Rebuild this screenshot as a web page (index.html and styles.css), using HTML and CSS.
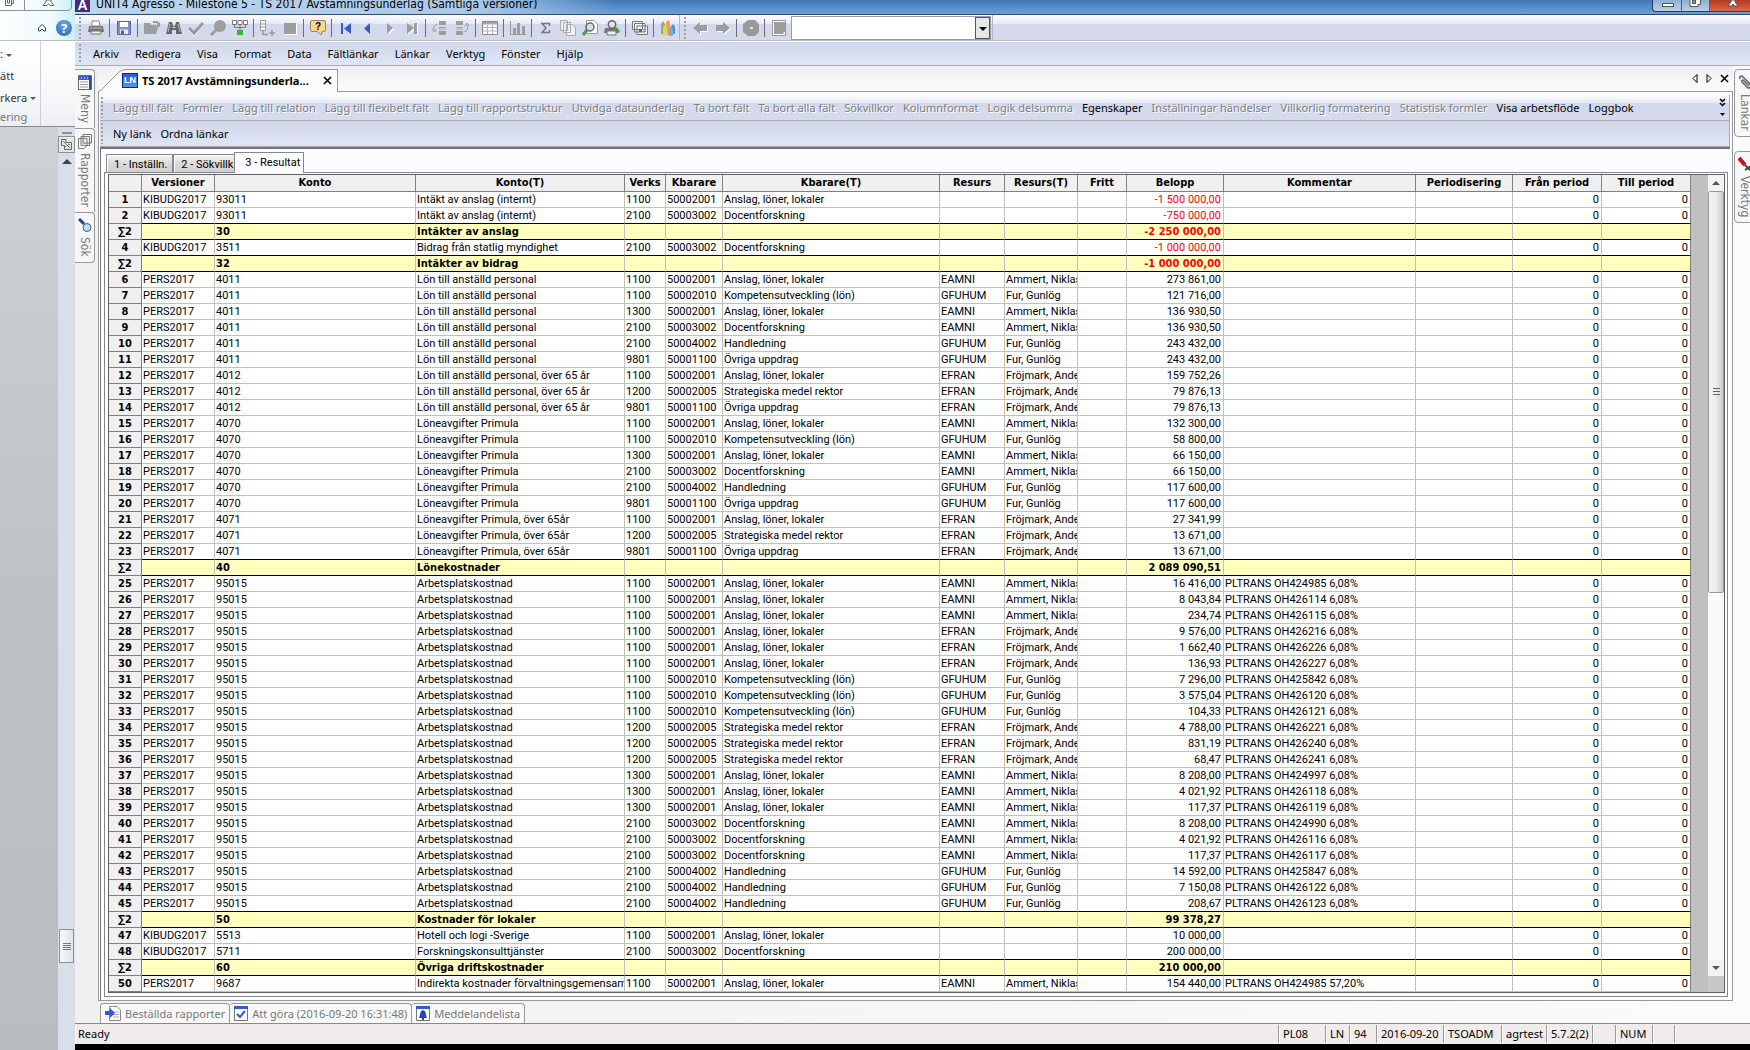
FILE: index.html
```html
<!DOCTYPE html>
<html lang="sv">
<head>
  <meta charset="UTF-8">
  <title>UNIT4 Agresso - TS 2017 Avstämningsunderlag</title>
  <link rel="stylesheet" href="styles.css">
</head>
<body>

  <!-- Fönstret som ligger bakom -->
  <aside class="word">
    <div class="word-top">
      <div class="word-controls">
        <svg width="72" height="11" viewBox="0 0 72 11"><path d="M0 10.500H67Q71.500 10.500 71.500 6V0M24.500 0V10" fill="none" stroke="#8b9399"/><path d="M5.500 0V5.500H11.500V0M7.500 0V3H9.500V0M11.500 3.500H13.500V0" fill="none" stroke="#666"/><path d="M43 5.500L46 2V0H51V2L54 5.500H50L48.500 3.500L47 5.500Z" fill="#fff" stroke="#666"/></svg>
      </div>
      <div class="word-help">
        <svg width="10" height="10" viewBox="0 0 10 10"><path d="M1.500 5L5 1.500L8.500 5V8H7L5 6L3 8H1.500Z" fill="#fff" stroke="#444"/></svg>
        <button class="help" aria-label="Hjälp">?</button>
      </div>
    </div>
    <div class="word-ribbon">
      <div class="word-group">
        <button>: <i class="caret"></i></button>
        <button>ätt</button>
        <button>rkera <i class="caret"></i></button>
        <span>ering</span>
      </div>
    </div>
    <div class="word-page">
      <div class="word-scroll">
        <i class="split"></i>
        <svg class="ruler" width="17" height="17" viewBox="0 0 17 17"><rect x=".5" y=".5" width="16" height="16" fill="#e4e8ed" stroke="#8c9196"/><path d="M3.500 3.500H8V6.500H13.500V13.500H6.500V9.500H3.500ZM5 5L12 12M8 10L6.500 11.500M10 8L12 9" fill="none" stroke="#666"/></svg>
        <i class="up"></i>
        <i class="word-thumb"></i>
      </div>
    </div>
  </aside>

  <div class="agresso">
    <header class="titlebar">
      <span class="logo">A</span>
      <span class="title">UNIT4 Agresso - Milestone 5 - TS 2017 Avstämningsunderlag (Samtliga versioner)</span>
      <div class="window-buttons">
        <button aria-label="Minimera"><svg width="28" height="12" viewBox="0 0 28 12"><rect x="9.500" y="3.500" width="11" height="3" fill="#fff" stroke="#555"/></svg></button>
        <button aria-label="Återställ"><svg width="27" height="12" viewBox="0 0 27 12"><path d="M8 0V6.500H16V4.500H18.500V0" fill="#fff" stroke="#555"/><rect x="10.500" y="0" width="3" height="3.500" fill="#79a" stroke="#555"/></svg></button>
        <button class="close" aria-label="Stäng"><svg width="40" height="12" viewBox="0 0 40 12"><path d="M18 6L21 2V0H25V2L28 6H24.500L23 4L21.500 6Z" fill="#fff" stroke="#555"/></svg></button>
      </div>
    </header>

    <div class="toolbar">
      <i class="grip"></i>
      <button aria-label="Skriv ut"><svg viewBox="0 0 16 16"><path d="M4 1H11L12 6H4Z" fill="#fff" stroke="#888"/><path d="M1 6H15L16 12H0Z" fill="#777"/><path d="M2 8H14" stroke="#bbb"/><path d="M3 11H13V14H3Z" fill="#eee" stroke="#777"/><path d="M12 12H14V14H12Z" fill="#7c6"/></svg></button>
      <i class="sep"></i>
      <button aria-label="Spara"><svg viewBox="0 0 16 16"><path d="M1.500 1.500H14.500V14.500H1.500Z" fill="#8292c4" stroke="#5a6797"/><path d="M4 2H12V7H4Z" fill="#fff"/><path d="M4 9.500H12V14H4Z" fill="#e8eaf2"/><path d="M5 10.500H8V14H5Z" fill="#55618c"/></svg></button>
      <i class="sep"></i>
      <button aria-label="Öppna"><svg viewBox="0 0 16 16"><path d="M0 3H6L7 5H12V7H14L12 14H0ZM9 1H14V3L16 2V7H12L13 5V3H9Z" fill="#9d9d9d"/></svg></button>
      <button aria-label="Sök"><svg viewBox="0 0 16 16"><path d="M3 2H6L7 6H9L10 2H13L16 14H10V10H6V14H0Z" fill="#666"/><path d="M4 4L2 12M12 4L14 12" stroke="#bbb"/><path d="M6.500 7.500H9.500" stroke="#ddd"/></svg></button>
      <button aria-label="Bekräfta"><svg viewBox="0 0 16 16"><path d="M1 9L6 14L15 4" fill="none" stroke="#fff" stroke-width="3"/><path d="M1 8L6 13L15 3" fill="none" stroke="#999" stroke-width="3"/></svg></button>
      <button aria-label="Zooma"><svg viewBox="0 0 16 16"><circle cx="10" cy="6" r="6" fill="#9d9d9d"/><path d="M7 9L1 15" stroke="#9d9d9d" stroke-width="3"/></svg></button>
      <button aria-label="Struktur"><svg viewBox="0 0 16 16"><path d="M.5.5H4.500V4.500H.5ZM6 .5H10V4.500H6ZM11.500.5H15.500V4.500H11.500Z" fill="#fff" stroke="#777"/><path d="M2.500 5V7.500H13.500V5M8 5V11" fill="none" stroke="#777"/><path d="M5 10H11V15H5Z" fill="#3fae3f"/></svg></button>
      <i class="sep"></i>
      <button aria-label="Lägg till rad"><svg viewBox="0 0 16 16"><path d="M.5.500H5.500V10.500H.5ZM1 4H5M1 7H5" fill="#fff" stroke="#999"/><path d="M3 11V14.500H8M12 10V16M9 13H15" fill="none" stroke="#999" stroke-width="1.500"/></svg></button>
      <button aria-label="Stopp"><svg viewBox="0 0 16 16"><path d="M3 4H15V15H3Z" fill="#fff"/><path d="M2 3H14V14H2Z" fill="#9d9d9d"/></svg></button>
      <i class="sep"></i>
      <button aria-label="Hjälp"><svg viewBox="0 0 16 16"><path d="M2 .5H14Q15.500.5 15.500 2V10Q15.500 11.500 14 11.500H12L11 15L7 11.500H2Q.5 11.500.5 10V2Q.5.500 2 .5Z" fill="#ffd685" stroke="#9a8566"/><text x="5" y="10" class="balloon-mark">?</text></svg></button>
      <i class="sep"></i>
      <button aria-label="Första"><svg viewBox="0 0 16 16"><path d="M3 3H5V14H3ZM13 3V14L6 8.500Z" fill="#3b56c8"/></svg></button>
      <button aria-label="Föregående"><svg viewBox="0 0 16 16"><path d="M10 3V14L4 8.500Z" fill="#3b56c8"/></svg></button>
      <button aria-label="Nästa"><svg viewBox="0 0 16 16"><path d="M6 4V15L12 9Z" fill="#fff"/><path d="M5 3V14L11 8Z" fill="#9d9d9d"/></svg></button>
      <button aria-label="Sista"><svg viewBox="0 0 16 16"><path d="M4 4V15L11 9ZM12 4H14V15H12Z" fill="#fff"/><path d="M3 3V14L10 8ZM10 3H13V14H10Z" fill="#9d9d9d"/></svg></button>
      <i class="sep"></i>
      <button aria-label="Infoga före"><svg viewBox="0 0 16 16"><path d="M7 1H14V5H7ZM7 11H14V15H7Z" fill="#9d9d9d"/><path d="M7.500 7.500H13V9H7.500Z" fill="#fff" stroke="#9d9d9d"/><path d="M5 4Q1 5 2 10M0 9L2.500 12L4 9" fill="none" stroke="#9d9d9d"/></svg></button>
      <button aria-label="Infoga efter"><svg viewBox="0 0 16 16"><path d="M2 1H9V5H2ZM2 11H9V15H2Z" fill="#9d9d9d"/><path d="M3 7.500H8V9H3Z" fill="#fff" stroke="#9d9d9d"/><path d="M10 12Q15 11 13 5M11 6L13 3L15 6" fill="none" stroke="#9d9d9d"/></svg></button>
      <i class="sep"></i>
      <button aria-label="Tabell"><svg viewBox="0 0 16 16"><path d="M.5 1.500H15.500V14.500H.5Z" fill="#fff" stroke="#888"/><path d="M1 2H15V4.500H1Z" fill="#a5a9a9"/><path d="M1 7.500H15M1 11H15M5.500 5V14M10.500 5V14" stroke="#b5b5b5"/></svg></button>
      <i class="sep"></i>
      <button aria-label="Diagram"><svg viewBox="0 0 16 16"><path d="M.5 1V14.500H16" fill="none" stroke="#999"/><path d="M3 8H6V14H3ZM7 3H10V14H7ZM12 6H15V14H12Z" fill="#9d9d9d"/></svg></button>
      <i class="sep"></i>
      <button aria-label="Summa"><svg viewBox="0 0 16 16"><path d="M11.500 6V3.500H4L8 8L4 12.500H11.500V10" fill="none" stroke="#777" stroke-width="1.500"/></svg></button>
      <button aria-label="Kopiera"><svg viewBox="0 0 16 16"><path d="M.5.500H7.500V10.500H.5ZM3.500 2.500H10.500V12.500H3.500ZM6.500 4.500H12L15.500 8V15.500H6.500Z" fill="#f2f2f2" stroke="#aaa"/></svg></button>
      <button aria-label="Förhandsgranska"><svg viewBox="0 0 16 16"><path d="M4.500.5H12L15.500 4V13.500H4.500Z" fill="#fff" stroke="#999"/><circle cx="8" cy="7" r="4" fill="#cfe0e6" stroke="#666" stroke-width="1.500"/><path d="M5 10L1 15" stroke="#4a9c3c" stroke-width="3"/></svg></button>
      <button aria-label="Granska utskrift"><svg viewBox="0 0 16 16"><path d="M1 8H14L15 13H0Z" fill="#777"/><path d="M3 11H12V15H3Z" fill="#eee" stroke="#777"/><circle cx="8" cy="4.500" r="3.700" fill="#dde6e6" stroke="#666" stroke-width="1.500"/><path d="M11 8L15 12" stroke="#4a9c3c" stroke-width="2.500"/></svg></button>
      <i class="sep"></i>
      <button aria-label="Fönster"><svg viewBox="0 0 16 16"><path d="M.5 1.500H10.500V9.500H.5ZM2.500 3.500H13V12H2.500ZM5 6H15.500V14.500H5Z" fill="#f4f4f4" stroke="#777"/><path d="M7 9H10V12H7Z" fill="#3f5fb8"/><path d="M11 9.500H14M11 11.500H14" stroke="#888"/></svg></button>
      <i class="sep"></i>
      <button aria-label="Färger"><svg viewBox="0 0 16 16"><path d="M1 4L3 1L5 4V14H1Z" fill="#8fb070"/><path d="M6 2L8 0L10 2V15H6Z" fill="#f0a050"/><path d="M3 8L5 5L7 8V16H3Z" fill="#e8d070"/><path d="M11 7L13 4L15 7V14H11Z" fill="#4a90bc"/><path d="M9 9L11 6L13 9V16H9Z" fill="#76b0d0"/></svg></button>
      <i class="bar-end"></i>
      <i class="grip"></i>
      <button aria-label="Bakåt"><svg viewBox="0 0 16 16"><path d="M1 9L8 3V6H15V12H8V15Z" fill="#fff"/><path d="M0 8L7 2V5H14V11H7V14Z" fill="#9d9d9d"/></svg></button>
      <button aria-label="Framåt"><svg viewBox="0 0 16 16"><path d="M16 9L9 3V6H2V12H9V15Z" fill="#fff"/><path d="M15 8L8 2V5H1V11H8V14Z" fill="#9d9d9d"/></svg></button>
      <i class="sep"></i>
      <button aria-label="Stoppa"><svg viewBox="0 0 16 16"><path d="M5 0H12L16 4V12L12 16H5L0 12V4Z" fill="#999"/><path d="M7 7H10V9H7Z" fill="#e4e4ea"/></svg></button>
      <i class="sep"></i>
      <button aria-label="Sida"><svg viewBox="0 0 16 16"><path d="M1.500.5H14.500V15.500H1.500Z" fill="#fff" stroke="#999"/><path d="M3 2H14V12H13L12 14H3Z" fill="#9d9d9d"/></svg></button>
      <div class="combo">
        <select aria-label="Adress"><option></option></select>
        <i class="combo-arrow"></i>
      </div>
      <i class="bar-end"></i>
    </div>

    <nav class="menu">
      <i class="grip"></i>
      <button>Arkiv</button>
      <button>Redigera</button>
      <button>Visa</button>
      <button>Format</button>
      <button>Data</button>
      <button>Fältlänkar</button>
      <button>Länkar</button>
      <button>Verktyg</button>
      <button>Fönster</button>
      <button>Hjälp</button>
    </nav>

    <div class="workspace">
      <div class="side side-left">
        <button><svg width="14" height="15" viewBox="0 0 14 15"><path d="M.5.5H13.500V14.500H.5Z" fill="#fff" stroke="#667"/><path d="M1 1H11V5H1Z" fill="#3b5fd0"/><path d="M12 1V14" stroke="#2b45a0" stroke-width="2"/><path d="M2 7H10M2 9.500H10M2 12H10" stroke="#999"/><path d="M3 3H4M6 3H7M9 3H10" stroke="#fff"/></svg>Meny</button>
        <button><svg width="14" height="15" viewBox="0 0 14 15"><path d="M5 .5H13.500V9H5ZM3 2.500H11.500V11.500H3ZM.5 4.500H9V11.500L6 14.500H.5Z" fill="#f4f4f4" stroke="#777"/><path d="M3 7H7M3 9H7M3 11H6" stroke="#aaa"/></svg>Rapporter</button>
        <button><svg width="14" height="15" viewBox="0 0 14 15"><path d="M1 1L6 6" stroke="#1f3f8f" stroke-width="3"/><circle cx="9" cy="9.500" r="4" fill="#b4e2ee" stroke="#557"/></svg>Sök</button>
      </div>

      <main class="document">
        <div class="doc-tabs">
          <svg class="slope" width="28" height="23" viewBox="0 0 28 23"><path d="M0 23Q4 22 7 17L20 4Q23 .5 28 .5V23Z" fill="#fcfcfc"/><path d="M0 22.500Q4 22 7 17L20 4Q23 .5 28 .5" fill="none" stroke="#999"/></svg>
          <div class="doc-tab">
            <span class="ln">LN</span>
            <b>TS 2017 Avstämningsunderla...</b>
            <button aria-label="Stäng flik"><svg width="9" height="9" viewBox="0 0 9 9"><path d="M1 1L8 8M8 1L1 8" stroke="#000" stroke-width="1.600"/></svg></button>
          </div>
          <div class="doc-nav">
            <button aria-label="Föregående flik"><svg width="6" height="9" viewBox="0 0 6 9"><path d="M5 .5V8.500L1 4.500Z" fill="#fff" stroke="#000"/></svg></button>
            <button aria-label="Nästa flik"><svg width="6" height="9" viewBox="0 0 6 9"><path d="M1 .5V8.500L5 4.500Z" fill="#fff" stroke="#000"/></svg></button>
            <button aria-label="Stäng"><svg width="9" height="9" viewBox="0 0 9 9"><path d="M1 1L8 8M8 1L1 8" stroke="#000" stroke-width="1.600"/></svg></button>
          </div>
        </div>

        <div class="frame">
          <div class="linkbar">
            <i class="grip"></i>
            <button disabled>Lägg till fält</button>
            <button disabled>Formler</button>
            <button disabled>Lägg till relation</button>
            <button disabled>Lägg till flexibelt fält</button>
            <button disabled>Lägg till rapportstruktur</button>
            <button disabled>Utvidga dataunderlag</button>
            <button disabled>Ta bort fält</button>
            <button disabled>Ta bort alla fält</button>
            <button disabled>Sökvillkor</button>
            <button disabled>Kolumnformat</button>
            <button disabled>Logik delsumma</button>
            <button>Egenskaper</button>
            <button disabled>Inställningar händelser</button>
            <button disabled>Villkorlig formatering</button>
            <button disabled>Statistisk formler</button>
            <button>Visa arbetsflöde</button>
            <button>Loggbok</button>
            <button class="more" aria-label="Fler knappar"><svg width="7" height="19" viewBox="0 0 7 19"><path d="M1 1L3.500 3.500L6 1M1 5L3.500 7.500L6 5" fill="none" stroke="#000" stroke-width="1.500"/><path d="M1 15H6L3.500 18Z"/></svg></button>
          </div>
          <div class="linkbar second">
            <i class="grip"></i>
            <button>Ny länk</button>
            <button>Ordna länkar</button>
          </div>

          <div class="panel">
            <div class="tabs">
              <button>1 - Inställn.</button>
              <button>2 - Sökvillk</button>
              <button class="active">3 - Resultat</button>
            </div>
            <div class="page">
              <div class="grid">
                <table>
                  <colgroup>
                    <col class="c-nr"><col class="c-ver"><col class="c-konto"><col class="c-kontot">
                    <col class="c-verks"><col class="c-kb"><col class="c-kbt"><col class="c-res">
                    <col class="c-rest"><col class="c-fritt"><col class="c-belopp"><col class="c-komm">
                    <col class="c-per"><col class="c-fran"><col class="c-till">
                  </colgroup>
                  <thead>
                    <tr>
                      <th></th><th>Versioner</th><th>Konto</th><th>Konto(T)</th><th>Verks</th>
                      <th>Kbarare</th><th>Kbarare(T)</th><th>Resurs</th><th>Resurs(T)</th><th>Fritt</th>
                      <th>Belopp</th><th>Kommentar</th><th>Periodisering</th><th>Från period</th><th>Till period</th>
                    </tr>
                  </thead>
                  <tbody id="rows"></tbody>
                </table>
                <div class="filler"></div>
                <div class="scrollbar">
                  <i class="arrow-up"></i>
                  <div class="track"><i class="thumb"></i></div>
                  <i class="arrow-down"></i>
                  <i class="corner"></i>
                </div>
              </div>
            </div>
          </div>
        </div>

        <div class="bottom-tabs">
          <button><svg width="16" height="15" viewBox="0 0 16 15"><path d="M4.500.5H12L15.500 4V14.500H4.500Z" fill="#fff" stroke="#888"/><path d="M8 6H14M8 8.500H14M8 11H14" stroke="#aaa"/><path d="M0 5H5V2L10 7L5 12V9H0Z" fill="#3558d4"/></svg>Beställda rapporter</button>
          <button><svg width="14" height="15" viewBox="0 0 14 15"><path d="M.5.5H13.500V14.500H.5Z" fill="#fff" stroke="#777"/><path d="M0 0H14V3H0Z" fill="#3558d4"/><path d="M3 8L6 11L11 5" fill="none" stroke="#3558d4" stroke-width="2"/></svg>Att göra (2016-09-20 16:31:48)</button>
          <button><svg width="14" height="15" viewBox="0 0 14 15"><path d="M.5.5H13.500V14.500H.5Z" fill="#fff" stroke="#777"/><path d="M0 0H14V3H0Z" fill="#3558d4"/><path d="M7 4Q10 5 10 9L11 12H3L4 9Q4 5 7 4Z" fill="#2444b8"/><path d="M6 12H8V14H6Z" fill="#2444b8"/></svg>Meddelandelista</button>
        </div>
      </main>

      <div class="side side-right">
        <button><svg width="14" height="15" viewBox="0 0 14 15"><path d="M2 4Q1 1 4 1L13 10Q13 13 10 13L4 7Q3 5 5 5L11 11" fill="none" stroke="#666" stroke-width="1.600"/></svg>Länkar</button>
        <button><svg width="14" height="15" viewBox="0 0 14 15"><path d="M1 1L7 8" stroke="#c81414" stroke-width="4"/><path d="M7 8L12 13M7 13L13 9" stroke="#444" stroke-width="2"/></svg>Verktyg</button>
      </div>
    </div>

    <footer class="statusbar">
      <span class="ready">Ready</span>
      <span class="s-client">PL08</span>
      <span class="s-ln">LN</span>
      <span class="s-no">94</span>
      <span class="s-date">2016-09-20</span>
      <span class="s-user">TSOADM</span>
      <span class="s-db">agrtest</span>
      <span class="s-ver">5.7.2(2)</span>
      <span class="s-e1"></span>
      <span class="s-num">NUM</span>
      <span class="s-e2"></span>
      <span class="s-e3"></span>
    </footer>
  </div>

  <script src="script.js"></script>
</body>
</html>
```
FILE: styles.css
```css
* {
  box-sizing: border-box;
}

body {
  margin: 0;
  min-height: 100vh;
  display: flex;
  overflow: hidden;
  background: #000;
  color: #000;
  font-family: "Noto Sans", "Open Sans", sans-serif;
  font-size: 11px;
}

button {
  margin: 0;
  padding: 0;
  border: 0;
  background: none;
  color: inherit;
  font: inherit;
  white-space: nowrap;
}

svg {
  display: block;
  flex: none;
}

/* Bakgrundsfönster */
.word {
  width: 75px;
  flex: none;
  display: flex;
  flex-direction: column;
  background: #c4c7cb;
}

.word-top {
  height: 41px;
  background: linear-gradient(90deg, #fdfefe, #eefafc 70%, #c8f0f6);
  border-bottom: 1px solid #b9bfc4;
}

.word-controls {
  height: 20px;
}

.word-help {
  display: flex;
  align-items: center;
  justify-content: flex-end;
  gap: 9px;
  padding-right: 3px;
}

.help {
  width: 16px;
  height: 16px;
  border-radius: 50%;
  background: radial-gradient(circle at 50% 30%, #6ea6e6, #2a62b4);
  color: #fff;
  font-size: 13px;
  font-weight: bold;
  line-height: 16px;
}

.word-ribbon {
  height: 86px;
  background: linear-gradient(#fff, #f6f7f9 70%, #eceef1);
  border-bottom: 1px solid #868a8f;
}

.word-group {
  width: 41px;
  height: 85px;
  padding-top: 2px;
  border-right: 1px solid #ccd0d5;
  display: flex;
  flex-direction: column;
  align-items: flex-start;
  color: #333;
}

.word-group button {
  height: 22px;
}

.word-group span {
  height: 18px;
  line-height: 18px;
  color: #777;
}

.caret {
  display: inline-block;
  vertical-align: middle;
  border: 3px solid transparent;
  border-top-color: #555;
  border-bottom: 0;
}

.word-page {
  flex: 1;
  display: flex;
  justify-content: flex-end;
  background: linear-gradient(#ced1d6, #bec1c6 50%, #b9bcc1);
}

.word-scroll {
  width: 17px;
  display: flex;
  flex-direction: column;
  align-items: center;
  background: #d9dfe8;
}

.split {
  width: 10px;
  height: 2px;
  margin: 5px 0 2px;
  background: #8c9196;
}

.up {
  margin-top: 6px;
  border: 5px solid transparent;
  border-bottom-color: #444;
  border-top: 0;
}

.word-thumb {
  width: 15px;
  height: 34px;
  margin: auto 0 88px;
  border: 1px solid #8a9097;
  background:
    repeating-linear-gradient(#777 0 1px, transparent 1px 2px) center / 8px 7px no-repeat,
    linear-gradient(90deg, #f6f8fa, #dfe4ea);
}

/* Huvudfönster */
.agresso {
  flex: 1;
  min-width: 0;
  display: flex;
  flex-direction: column;
  background: #f0f0f0;
  border-bottom: 7px solid #000;
}

.titlebar {
  height: 15px;
  display: flex;
  align-items: flex-start;
  overflow: hidden;
  background: linear-gradient(90deg, #bcd6ee, #a9c9e8 400px, rgba(169, 201, 232, 0) 540px), linear-gradient(#3f78b4, #6ba0da);
  border-bottom: 1px solid #33486a;
}

.logo {
  width: 15px;
  height: 12px;
  background: #4a2a7c;
  color: #fff;
  font: bold 14px/10px "Liberation Sans", sans-serif;
  text-align: center;
}

.title {
  flex: 1;
  padding-left: 6px;
  font: 12px/9px "DejaVu Sans Condensed", sans-serif;
  white-space: nowrap;
}

.window-buttons {
  height: 12px;
  display: flex;
  border: 1px solid #2c3e55;
  border-width: 0 0 1px 1px;
  border-radius: 0 0 0 4px;
  background: linear-gradient(#8fb0d2, #b9d0e6);
}

.window-buttons button + button {
  border-left: 1px solid #4a6584;
}

.window-buttons .close {
  background: linear-gradient(#b03a22, #dc6a4c);
}

.toolbar {
  height: 27px;
  display: flex;
  align-items: center;
  padding-left: 4px;
  background: linear-gradient(#fdfdff, #e4e9f5 9px, #d3d9ec 9px, #d5dbed);
  border-bottom: 1px solid #fff;
  box-shadow: inset 0 -1px #b8bbc4;
}

.toolbar button {
  width: 22px;
  padding: 0 3px;
}

.toolbar svg {
  width: 16px;
  height: 16px;
}

.balloon-mark {
  font: bold 10px "Liberation Sans", sans-serif;
}

.grip {
  width: 6px;
  align-self: stretch;
  flex: none;
  margin: 2px 0;
  background: linear-gradient(#9a9eaa 2px, transparent 2px) 0 0 / 2px 4px repeat-y;
}

.sep {
  width: 1px;
  height: 18px;
  margin: 0 3px 0 2px;
  flex: none;
  background: #6c6f78;
}

.bar-end {
  width: 1px;
  margin-right: 4px;
  align-self: stretch;
  flex: none;
  background: #b4b7c0;
}

.combo {
  position: relative;
  width: 200px;
  height: 24px;
  margin: 0 1px;
}

.combo select {
  width: 100%;
  height: 100%;
  appearance: none;
  background: #fff;
  border: 1px solid #9a9da6;
  border-radius: 0;
}

.combo-arrow {
  position: absolute;
  top: 1px;
  right: 1px;
  width: 15px;
  height: 22px;
  border: 1px solid #555;
  background: #e6e6e6;
  pointer-events: none;
}

.combo-arrow::after {
  content: "";
  position: absolute;
  top: 9px;
  left: 3px;
  border: 4px solid transparent;
  border-top-color: #000;
  border-bottom: 0;
}

.menu {
  height: 24px;
  display: flex;
  align-items: center;
  padding-left: 4px;
  background: linear-gradient(#d2d8ec, #dfe5f4);
  border-bottom: 1px solid #adadad;
}

.menu button {
  padding: 0 8px;
}

.workspace {
  flex: 1;
  display: flex;
  background: linear-gradient(90deg, #f0f0f0, #fbfbfb);
  border-bottom: 1px solid #888;
}

/* Lodräta flikar */
.side {
  display: flex;
  flex-direction: column;
  flex: none;
  overflow: hidden;
  padding-top: 3px;
}

.side-left {
  width: 23px;
  align-items: flex-start;
  background: #f0f0f0;
}

.side-right {
  width: 17px;
  padding-left: 1px;
  gap: 14px;
  background: #fbfbfb;
}

.side button {
  display: flex;
  align-items: center;
  gap: 4px;
  padding: 5px 2px;
  writing-mode: vertical-rl;
  border: 1px solid #999;
  color: #777;
  font: 12px/14px "DejaVu Sans Condensed", sans-serif;
  background: #f7f7f7;
}

.side-left button {
  width: 20px;
  border-width: 1px 1px 0 0;
  border-radius: 0 4px 0 0;
}

.side-left button:last-child {
  border-bottom-width: 1px;
  border-bottom-right-radius: 4px;
}

.side-right button {
  width: 22px;
  border-radius: 4px 0 0 4px;
}

/* Dokument */
.document {
  flex: 1;
  min-width: 0;
  display: flex;
  flex-direction: column;
}

.doc-tabs {
  height: 26px;
  display: flex;
  align-items: flex-end;
  border-bottom: 1px solid #999;
  background: linear-gradient(#efefef, #fcfcfc);
}

.slope {
  margin-bottom: -1px;
}

.doc-tab {
  height: 23px;
  margin-bottom: -1px;
  padding: 0 5px 1px 0;
  display: flex;
  align-items: center;
  gap: 4px;
  border-top: 1px solid #999;
  border-right: 1px solid #999;
  background: #fcfcfc;
}

.doc-tab b {
  margin-right: 10px;
}

.ln {
  width: 16px;
  height: 15px;
  margin-left: -4px;
  border: 1px solid #0a2a9a;
  background: linear-gradient(#2a55d8, #4f96f4);
  color: #fff;
  font: bold 9px/13px "Liberation Sans", sans-serif;
  text-align: center;
}

.doc-nav {
  flex: 1;
  display: flex;
  justify-content: flex-end;
  align-items: center;
  align-self: center;
  gap: 8px;
  padding-right: 4px;
}

.frame {
  flex: 1;
  display: flex;
  flex-direction: column;
  padding: 3px 2px 0 1px;
  border: 1px solid #999;
  border-top: 0;
  background: #fcfcff;
}

.linkbar {
  height: 26px;
  display: flex;
  align-items: center;
  gap: 1px;
  padding-left: 1px;
  background: linear-gradient(#fdfdff, #e4e9f5 8px, #d3d9ec 8px, #d5dbed);
  border-bottom: 1px solid #aaa;
  border-right: 1px solid #aaa;
}

.linkbar button {
  padding: 0 4px;
}

.linkbar .grip + button {
  margin-left: 1px;
}

.linkbar button:disabled {
  color: #7d7d7d;
  text-shadow: 1px 1px #fff;
}

.linkbar .more {
  margin-left: auto;
  padding: 0 3px;
}

.linkbar.second {
  background: linear-gradient(#d2d8ec, #dfe5f4);
}

.panel {
  flex: 1;
  display: flex;
  flex-direction: column;
  padding: 4px 2px 3px 3px;
  border-top: 2px solid #74767a;
  border-left: 1px solid #74767a;
  background: #fcfcff;
}

.tabs {
  height: 19px;
  display: flex;
  align-items: flex-end;
  padding-left: 2px;
  font-family: Roboto, sans-serif;
}

.tabs button {
  height: 18px;
  padding: 2px 5px 0 7px;
  border: 1px solid #85878c;
  border-bottom: 0;
  background: linear-gradient(#f4f4f4, #dadada 50%, #d0d0d0);
  box-shadow: inset 1px 1px #fff;
}

.tabs button + button {
  padding-right: 2px;
}

.tabs button + .active {
  height: 21px;
  margin: 0 0 -1px -2px;
  padding: 0 3px 2px 10px;
  background: #fcfcff;
  position: relative;
}

.page {
  flex: 1;
  display: flex;
  padding: 1px 2px 3px 3px;
  border: 1px solid #85878c;
}

.grid {
  flex: 1;
  min-width: 0;
  display: flex;
  border: 1px solid #606060;
  background: #c0c0c0;
}

table {
  width: 1582px;
  flex: none;
  table-layout: fixed;
  border-collapse: separate;
  border-spacing: 0;
  font-family: Roboto, sans-serif;
  align-self: flex-start;
}

.c-nr { width: 33px; }
.c-ver { width: 73px; }
.c-konto { width: 201px; }
.c-kontot { width: 209px; }
.c-verks { width: 41px; }
.c-kb { width: 57px; }
.c-kbt { width: 217px; }
.c-res { width: 65px; }
.c-rest { width: 73px; }
.c-fritt { width: 49px; }
.c-belopp { width: 97px; }
.c-komm { width: 192px; }
.c-per { width: 97px; }
.c-fran { width: 89px; }
.c-till { width: 89px; }

th,
.sum td {
  font: bold 11px/15px "DejaVu Sans Condensed", sans-serif;
}

th {
  height: 16px;
  padding: 0;
  background: #f0f0f0;
  border-right: 1px solid #808080;
  border-bottom: 1px solid #808080;
  white-space: nowrap;
}

thead th {
  height: 17px;
  line-height: 16px;
}

td {
  height: 16px;
  padding: 0 2px 0 1px;
  background: #fff;
  border-right: 1px solid #c0c0c0;
  border-bottom: 1px solid #c0c0c0;
  line-height: 15px;
  white-space: nowrap;
  overflow: hidden;
}

td:nth-child(9) {
  padding-right: 0;
}

td:last-child {
  border-right-color: #808080;
}

.num {
  text-align: right;
}

.neg {
  color: #f00;
}

.sum td {
  background: #ffffc0;
}

.sum td,
.before-sum td {
  border-bottom-color: #000;
}

.filler {
  flex: 1;
}

.scrollbar {
  width: 16px;
  display: flex;
  flex-direction: column;
  background: #fafafa;
}

.arrow-up,
.arrow-down {
  height: 16px;
  display: flex;
  align-items: center;
  justify-content: center;
  background: #f3f3f3;
}

.arrow-up::after,
.arrow-down::after {
  content: "";
  border: 4px solid transparent;
}

.arrow-up::after {
  border-bottom-color: #555;
  border-top: 0;
}

.arrow-down::after {
  border-top-color: #555;
  border-bottom: 0;
}

.track {
  flex: 1;
}

.thumb {
  display: block;
  height: 402px;
  border: 1px solid #999;
  border-radius: 2px;
  background:
    repeating-linear-gradient(#666 0 1px, transparent 1px 3px) center / 7px 9px no-repeat,
    linear-gradient(90deg, #f5f5f5, #ececee 50%, #c8c9cc);
}

.corner {
  height: 16px;
  background: #c8c8c8;
}

.bottom-tabs {
  height: 22px;
  display: flex;
  align-items: flex-end;
  padding-left: 2px;
}

.bottom-tabs button {
  height: 20px;
  display: flex;
  align-items: center;
  gap: 4px;
  padding: 0 4px;
  border: 1px solid #999;
  border-bottom: 0;
  border-radius: 3px 4px 0 0;
  background: #f8f8f8;
  color: #777;
}

.bottom-tabs button + button {
  border-left: 0;
}

.statusbar {
  height: 20px;
  display: flex;
  padding: 1px 0;
  background: #f0eceb;
  line-height: 17px;
}

.statusbar span {
  flex: none;
  padding-left: 4px;
  border-left: 1px solid #999;
  box-shadow: inset 1px 0 #fff;
}

.statusbar .ready {
  flex: 1;
  padding-left: 3px;
  border-left: 0;
}

.s-client { width: 47px; }
.s-ln { width: 24px; }
.s-no { width: 27px; }
.s-date { width: 67px; }
.s-user { width: 58px; }
.s-db { width: 45px; }
.s-ver { width: 46px; }
.s-e1 { width: 23px; }
.s-num { width: 37px; }
.s-e2 { width: 22px; }
.s-e3 { width: 76px; }
```
FILE: script.js
```js
const kontoText = {
  93011: 'Intäkt av anslag (internt)',
  3511: 'Bidrag från statlig myndighet',
  4011: 'Lön till anställd personal',
  4012: 'Lön till anställd personal, över 65 år',
  4070: 'Löneavgifter Primula',
  4071: 'Löneavgifter Primula, över 65år',
  95015: 'Arbetsplatskostnad',
  5513: 'Hotell och logi -Sverige',
  5711: 'Forskningskonsulttjänster',
  9687: 'Indirekta kostnader förvaltningsgemensam'
};

const kbarareText = {
  50002001: 'Anslag, löner, lokaler',
  50002005: 'Strategiska medel rektor',
  50002010: 'Kompetensutveckling (lön)',
  50003002: 'Docentforskning',
  50004002: 'Handledning',
  50001100: 'Övriga uppdrag'
};

const resursText = {
  EAMNI: 'Ammert, Niklas',
  GFUHUM: 'Fur, Gunlög',
  EFRAN: 'Fröjmark, Ande'
};

// version|konto|verks|kbarare|resurs|belopp|kommentar, summarader: S|konto|text|belopp
const data = `
KIBUDG2017|93011|1100|50002001||-1 500 000,00|
KIBUDG2017|93011|2100|50003002||-750 000,00|
S|30|Intäkter av anslag|-2 250 000,00
KIBUDG2017|3511|2100|50003002||-1 000 000,00|
S|32|Intäkter av bidrag|-1 000 000,00
PERS2017|4011|1100|50002001|EAMNI|273 861,00|
PERS2017|4011|1100|50002010|GFUHUM|121 716,00|
PERS2017|4011|1300|50002001|EAMNI|136 930,50|
PERS2017|4011|2100|50003002|EAMNI|136 930,50|
PERS2017|4011|2100|50004002|GFUHUM|243 432,00|
PERS2017|4011|9801|50001100|GFUHUM|243 432,00|
PERS2017|4012|1100|50002001|EFRAN|159 752,26|
PERS2017|4012|1200|50002005|EFRAN|79 876,13|
PERS2017|4012|9801|50001100|EFRAN|79 876,13|
PERS2017|4070|1100|50002001|EAMNI|132 300,00|
PERS2017|4070|1100|50002010|GFUHUM|58 800,00|
PERS2017|4070|1300|50002001|EAMNI|66 150,00|
PERS2017|4070|2100|50003002|EAMNI|66 150,00|
PERS2017|4070|2100|50004002|GFUHUM|117 600,00|
PERS2017|4070|9801|50001100|GFUHUM|117 600,00|
PERS2017|4071|1100|50002001|EFRAN|27 341,99|
PERS2017|4071|1200|50002005|EFRAN|13 671,00|
PERS2017|4071|9801|50001100|EFRAN|13 671,00|
S|40|Lönekostnader|2 089 090,51
PERS2017|95015|1100|50002001|EAMNI|16 416,00|PLTRANS OH424985 6,08%
PERS2017|95015|1100|50002001|EAMNI|8 043,84|PLTRANS OH426114 6,08%
PERS2017|95015|1100|50002001|EAMNI|234,74|PLTRANS OH426115 6,08%
PERS2017|95015|1100|50002001|EFRAN|9 576,00|PLTRANS OH426216 6,08%
PERS2017|95015|1100|50002001|EFRAN|1 662,40|PLTRANS OH426226 6,08%
PERS2017|95015|1100|50002001|EFRAN|136,93|PLTRANS OH426227 6,08%
PERS2017|95015|1100|50002010|GFUHUM|7 296,00|PLTRANS OH425842 6,08%
PERS2017|95015|1100|50002010|GFUHUM|3 575,04|PLTRANS OH426120 6,08%
PERS2017|95015|1100|50002010|GFUHUM|104,33|PLTRANS OH426121 6,08%
PERS2017|95015|1200|50002005|EFRAN|4 788,00|PLTRANS OH426221 6,08%
PERS2017|95015|1200|50002005|EFRAN|831,19|PLTRANS OH426240 6,08%
PERS2017|95015|1200|50002005|EFRAN|68,47|PLTRANS OH426241 6,08%
PERS2017|95015|1300|50002001|EAMNI|8 208,00|PLTRANS OH424997 6,08%
PERS2017|95015|1300|50002001|EAMNI|4 021,92|PLTRANS OH426118 6,08%
PERS2017|95015|1300|50002001|EAMNI|117,37|PLTRANS OH426119 6,08%
PERS2017|95015|2100|50003002|EAMNI|8 208,00|PLTRANS OH424990 6,08%
PERS2017|95015|2100|50003002|EAMNI|4 021,92|PLTRANS OH426116 6,08%
PERS2017|95015|2100|50003002|EAMNI|117,37|PLTRANS OH426117 6,08%
PERS2017|95015|2100|50004002|GFUHUM|14 592,00|PLTRANS OH425847 6,08%
PERS2017|95015|2100|50004002|GFUHUM|7 150,08|PLTRANS OH426122 6,08%
PERS2017|95015|2100|50004002|GFUHUM|208,67|PLTRANS OH426123 6,08%
S|50|Kostnader för lokaler|99 378,27
KIBUDG2017|5513|1100|50002001||10 000,00|
KIBUDG2017|5711|2100|50003002||200 000,00|
S|60|Övriga driftskostnader|210 000,00
PERS2017|9687|1100|50002001|EAMNI|154 440,00|PLTRANS OH424985 57,20%
`.trim().split('\n').map(line => line.split('|'));

const html = data.map((r, i) => {
  const sum = r[0] === 'S';
  const beforeSum = data[i + 1] && data[i + 1][0] === 'S';
  const cells = sum
    ? ['', r[1], r[2], '', '', '', '', '', '', r[3], '', '', '', '']
    : [r[0], r[1], kontoText[r[1]], r[2], r[3], kbarareText[r[3]], r[4], resursText[r[4]] || '', '', r[5], r[6], '', '0', '0'];
  const tds = cells.map((c, n) => {
    let cls = n === 9 || n > 11 ? 'num' : '';
    if (n === 9 && c[0] === '-') cls += ' neg';
    return cls ? `<td class="${cls}">${c}</td>` : `<td>${c}</td>`;
  }).join('');
  const rowClass = sum ? 'sum' : beforeSum ? 'before-sum' : '';
  return `<tr class="${rowClass}"><th>${sum ? '∑2' : i + 1}</th>${tds}</tr>`;
}).join('');

document.getElementById('rows').innerHTML = html;
```
